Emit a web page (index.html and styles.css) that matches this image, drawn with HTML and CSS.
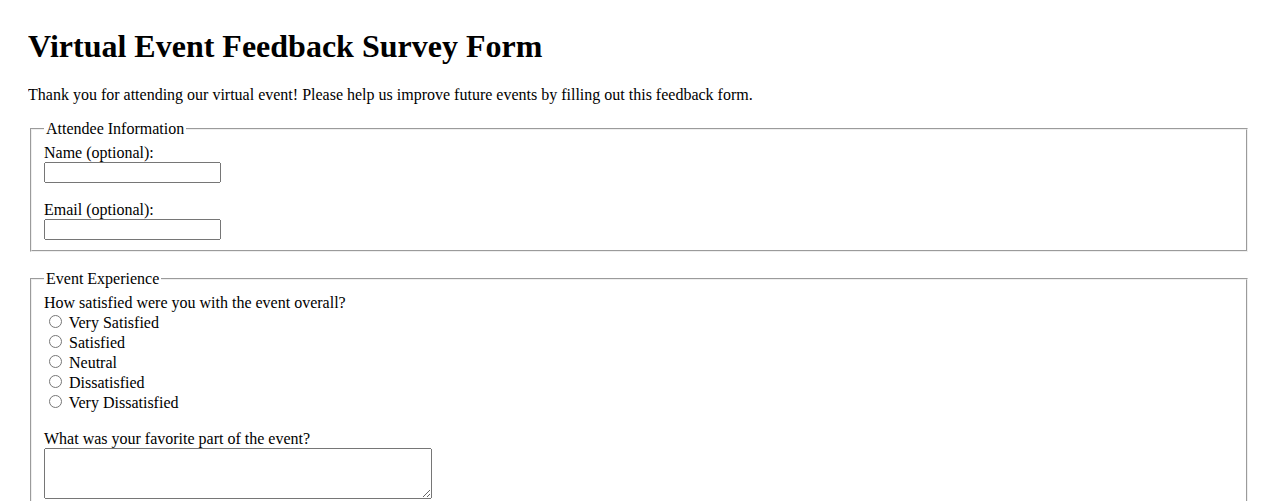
FILE: index.html
```html
<!DOCTYPE html>
<html>
<head>
    <meta charset="UTF-8">
    <title>Virtual Event Feedback Survey Form</title>
    <link rel="stylesheet" href="styles.css">
</head>
<body>
    <h1>Virtual Event Feedback Survey Form</h1>
    <p>Thank you for attending our virtual event! Please help us improve future events by filling out this feedback form.</p>

    <form>
        <fieldset>
            <legend>Attendee Information</legend>
            <label for="name">Name (optional):</label><br>
            <input type="text" id="name" name="name"><br><br>

            <label for="email">Email (optional):</label><br>
            <input type="email" id="email" name="email">
        </fieldset>
        <br>

        <fieldset>
            <legend>Event Experience</legend>
            <label>How satisfied were you with the event overall?</label><br>
            <input type="radio" id="very-satisfied" name="satisfaction" value="very-satisfied">
            <label for="very-satisfied">Very Satisfied</label><br>
            <input type="radio" id="satisfied" name="satisfaction" value="satisfied">
            <label for="satisfied">Satisfied</label><br>
            <input type="radio" id="neutral" name="satisfaction" value="neutral">
            <label for="neutral">Neutral</label><br>
            <input type="radio" id="dissatisfied" name="satisfaction" value="dissatisfied">
            <label for="dissatisfied">Dissatisfied</label><br>
            <input type="radio" id="very-dissatisfied" name="satisfaction" value="very-dissatisfied">
            <label for="very-dissatisfied">Very Dissatisfied</label><br><br>

            <label for="favorite">What was your favorite part of the event?</label><br>
            <textarea id="favorite" name="favorite"></textarea>
        </fieldset>
    </form>
</body>
</html>
```

FILE: styles.css
```css
body {
    margin: 28px;
    font-family: "Liberation Serif", "Times New Roman", serif;
    font-size: 16px;
    color: #000;
    background: #fff;
}

h1 {
    font-size: 32px;
    margin-top: 0;
}

input[type="text"],
input[type="email"] {
    width: 177px;
    height: 21px;
    box-sizing: border-box;
}

textarea {
    width: 388px;
    height: 51px;
    box-sizing: border-box;
}
```
